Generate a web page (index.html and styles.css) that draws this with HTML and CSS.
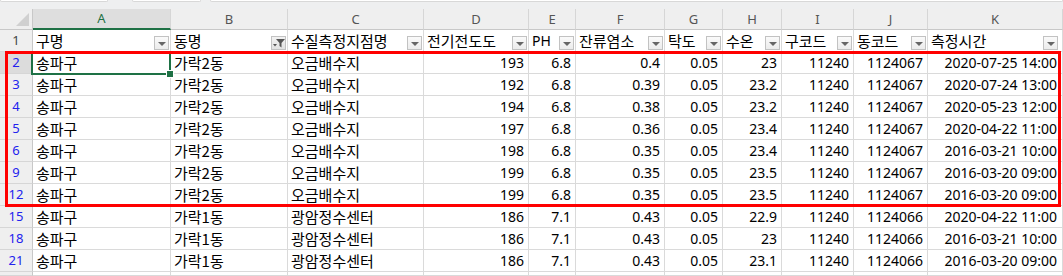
FILE: index.html
```html
<!DOCTYPE html>
<html lang="ko">
<head>
<meta charset="utf-8">
<link rel="stylesheet" href="styles.css">
</head>
<body>
<div class="app">
  <div class="topstrip">
    <div class="tb tb1"></div>
    <div class="tb tb2"></div>
    <div class="tb tb3"></div>
  </div>
  <div class="sheet">
    <div class="corner"><span class="tri"></span></div>
    <div class="ch sel">A</div>
    <div class="ch">B</div>
    <div class="ch">C</div>
    <div class="ch">D</div>
    <div class="ch">E</div>
    <div class="ch">F</div>
    <div class="ch">G</div>
    <div class="ch">H</div>
    <div class="ch">I</div>
    <div class="ch">J</div>
    <div class="ch">K</div>

    <div class="rh">1</div>
    <div class="c hd"><span>구명</span><span class="dd"><i></i></span></div>
    <div class="c hd"><span>동명</span><span class="dd act"><svg width="12" height="10" viewBox="0 0 12 10"><path d="M0 6h4l-2 2.5z" fill="#555"/><path d="M3 1h9L8.5 5v4.5L6.5 8V5z" fill="#555"/></svg></span></div>
    <div class="c hd"><span>수질측정지점명</span><span class="dd"><i></i></span></div>
    <div class="c hd"><span>전기전도도</span><span class="dd"><i></i></span></div>
    <div class="c hd"><span class="lat">PH</span><span class="dd"><i></i></span></div>
    <div class="c hd"><span>잔류염소</span><span class="dd"><i></i></span></div>
    <div class="c hd"><span>탁도</span><span class="dd"><i></i></span></div>
    <div class="c hd"><span>수온</span><span class="dd"><i></i></span></div>
    <div class="c hd"><span>구코드</span><span class="dd"><i></i></span></div>
    <div class="c hd"><span>동코드</span><span class="dd"><i></i></span></div>
    <div class="c hd"><span>측정시간</span><span class="dd"><i></i></span></div>

    <div class="rh blue rsel">2</div>
    <div class="c active">송파구</div><div class="c">가락2동</div><div class="c">오금배수지</div>
    <div class="c n">193</div><div class="c n">6.8</div><div class="c n">0.4</div><div class="c n">0.05</div><div class="c n">23</div><div class="c n">11240</div><div class="c n">1124067</div><div class="c n">2020-07-25 14:00</div>

    <div class="rh blue">3</div>
    <div class="c">송파구</div><div class="c">가락2동</div><div class="c">오금배수지</div>
    <div class="c n">192</div><div class="c n">6.8</div><div class="c n">0.39</div><div class="c n">0.05</div><div class="c n">23.2</div><div class="c n">11240</div><div class="c n">1124067</div><div class="c n">2020-07-24 13:00</div>

    <div class="rh blue">4</div>
    <div class="c">송파구</div><div class="c">가락2동</div><div class="c">오금배수지</div>
    <div class="c n">194</div><div class="c n">6.8</div><div class="c n">0.38</div><div class="c n">0.05</div><div class="c n">23.2</div><div class="c n">11240</div><div class="c n">1124067</div><div class="c n">2020-05-23 12:00</div>

    <div class="rh blue">5</div>
    <div class="c">송파구</div><div class="c">가락2동</div><div class="c">오금배수지</div>
    <div class="c n">197</div><div class="c n">6.8</div><div class="c n">0.36</div><div class="c n">0.05</div><div class="c n">23.4</div><div class="c n">11240</div><div class="c n">1124067</div><div class="c n">2020-04-22 11:00</div>

    <div class="rh blue">6</div>
    <div class="c">송파구</div><div class="c">가락2동</div><div class="c">오금배수지</div>
    <div class="c n">198</div><div class="c n">6.8</div><div class="c n">0.35</div><div class="c n">0.05</div><div class="c n">23.4</div><div class="c n">11240</div><div class="c n">1124067</div><div class="c n">2016-03-21 10:00</div>

    <div class="rh blue">9</div>
    <div class="c">송파구</div><div class="c">가락2동</div><div class="c">오금배수지</div>
    <div class="c n">199</div><div class="c n">6.8</div><div class="c n">0.35</div><div class="c n">0.05</div><div class="c n">23.5</div><div class="c n">11240</div><div class="c n">1124067</div><div class="c n">2016-03-20 09:00</div>

    <div class="rh blue">12</div>
    <div class="c">송파구</div><div class="c">가락2동</div><div class="c">오금배수지</div>
    <div class="c n">199</div><div class="c n">6.8</div><div class="c n">0.35</div><div class="c n">0.05</div><div class="c n">23.5</div><div class="c n">11240</div><div class="c n">1124067</div><div class="c n">2016-03-20 09:00</div>

    <div class="rh blue">15</div>
    <div class="c">송파구</div><div class="c">가락1동</div><div class="c">광암정수센터</div>
    <div class="c n">186</div><div class="c n">7.1</div><div class="c n">0.43</div><div class="c n">0.05</div><div class="c n">22.9</div><div class="c n">11240</div><div class="c n">1124066</div><div class="c n">2020-04-22 11:00</div>

    <div class="rh blue">18</div>
    <div class="c">송파구</div><div class="c">가락1동</div><div class="c">광암정수센터</div>
    <div class="c n">186</div><div class="c n">7.1</div><div class="c n">0.43</div><div class="c n">0.05</div><div class="c n">23</div><div class="c n">11240</div><div class="c n">1124066</div><div class="c n">2016-03-21 10:00</div>

    <div class="rh blue">21</div>
    <div class="c">송파구</div><div class="c">가락1동</div><div class="c">광암정수센터</div>
    <div class="c n">186</div><div class="c n">7.1</div><div class="c n">0.43</div><div class="c n">0.05</div><div class="c n">23.1</div><div class="c n">11240</div><div class="c n">1124066</div><div class="c n">2016-03-20 09:00</div>

    <div class="rh"></div>
    <div class="c"></div><div class="c"></div><div class="c"></div><div class="c"></div><div class="c"></div><div class="c"></div><div class="c"></div><div class="c"></div><div class="c"></div><div class="c"></div><div class="c"></div>

    <div class="redbox"></div>
  </div>
</div>
</body>
</html>
```
FILE: styles.css
```css
* { box-sizing: border-box; margin: 0; padding: 0; }
html, body { background: #fff; }
body { margin: 0; width: 1063px; height: 276px; overflow: hidden; font-family: "Noto Sans CJK KR", "Noto Sans", sans-serif; color: #000; }

.app { width: 1063px; height: 276px; overflow: hidden; }

.topstrip {
  height: 9px;
  background: #eeeff0;
  display: flex;
  align-items: flex-start;
}
.tb { height: 2px; background: #fff; border: 1px solid #d8d8d8; border-top: none; border-radius: 0 0 3px 3px; }
.tb1 { width: 108px; }
.tb2 { width: 69px; margin-left: 24px; }
.tb3 { flex: 1; margin-left: 9px; }

.sheet {
  position: relative;
  display: grid;
  grid-template-columns: 33px 138px 117px 136px 105px 47px 89px 58px 59px 72px 74px 135px;
  grid-template-rows: 21px repeat(11, 22px) 4px;
}

.corner {
  position: relative;
  background: #efefef;
  border-right: 1px solid #c8c8c8;
  border-bottom: 1px solid #c8c8c8;
}
.corner .tri {
  position: absolute; right: 3px; bottom: 3px;
  width: 0; height: 0;
  border-left: 13px solid transparent;
  border-bottom: 13px solid #d0d0d0;
}

.ch {
  background: #efefef;
  border-right: 1px solid #d6d6d6;
  border-bottom: 1px solid #c8c8c8;
  font-family: "Noto Sans", sans-serif;
  font-size: 13px;
  color: #555;
  display: flex; align-items: center; justify-content: center;
  line-height: 1;
}
.ch.sel {
  background: #dedede;
  color: #1e7145;
  border-bottom: 2px solid #1e7145;
}

.rh {
  background: #efefef;
  border-right: 1px solid #c8c8c8;
  border-bottom: 1px solid #d6d6d6;
  font-family: "Noto Sans", sans-serif;
  font-size: 13px;
  color: #444;
  display: flex; align-items: center; justify-content: center;
  line-height: 1;
}
.rh.blue { color: #2222ee; }
.rh.rsel { background: #dcdcdc; }

.c {
  border-right: 1px solid #dadada;
  border-bottom: 1px solid #dadada;
  font-size: 15px;
  line-height: 1;
  padding: 0 3px;
  display: flex; align-items: center;
  white-space: nowrap;
  overflow: hidden;
}
.c.n {
  justify-content: flex-end;
  font-family: "Noto Sans", sans-serif;
  font-size: 14px;
  padding-right: 4px;
}
.c.n:nth-child(12n) { padding-right: 5px; }
.c.hd {
  justify-content: space-between;
  padding-right: 1px;
}
.c.hd:nth-child(24) { padding-right: 4px; }
.c.hd .lat { font-family: "Noto Sans", sans-serif; font-size: 14px; }

.dd {
  width: 15px; height: 14px;
  margin-top: 5px;
  border: 1px solid #c2c2c2;
  background: linear-gradient(#fafafa, #ececec);
  display: flex; align-items: center; justify-content: center;
  flex: none;
}
.dd i {
  display: block; width: 0; height: 0;
  border-left: 4px solid transparent;
  border-right: 4px solid transparent;
  border-top: 4px solid #666;
  margin-top: 1px;
}
.dd.act { background: linear-gradient(#f2f2f2, #e2e2e2); }

.c.active { position: relative; overflow: visible; }
.c.active::before {
  content: "";
  position: absolute; left: -2px; top: -1px; right: -1px; bottom: -2px;
  border: 2px solid #1e7145;
  pointer-events: none;
}
.c.active::after {
  content: "";
  position: absolute; right: -4px; bottom: -5px;
  width: 6px; height: 6px;
  background: #1e7145;
  border: 1px solid #fff;
  z-index: 2;
}

.redbox {
  position: absolute;
  left: 5px; top: 42px;
  width: 1056px; height: 156px;
  border: 3px solid #f00;
  pointer-events: none;
  z-index: 3;
}
```
